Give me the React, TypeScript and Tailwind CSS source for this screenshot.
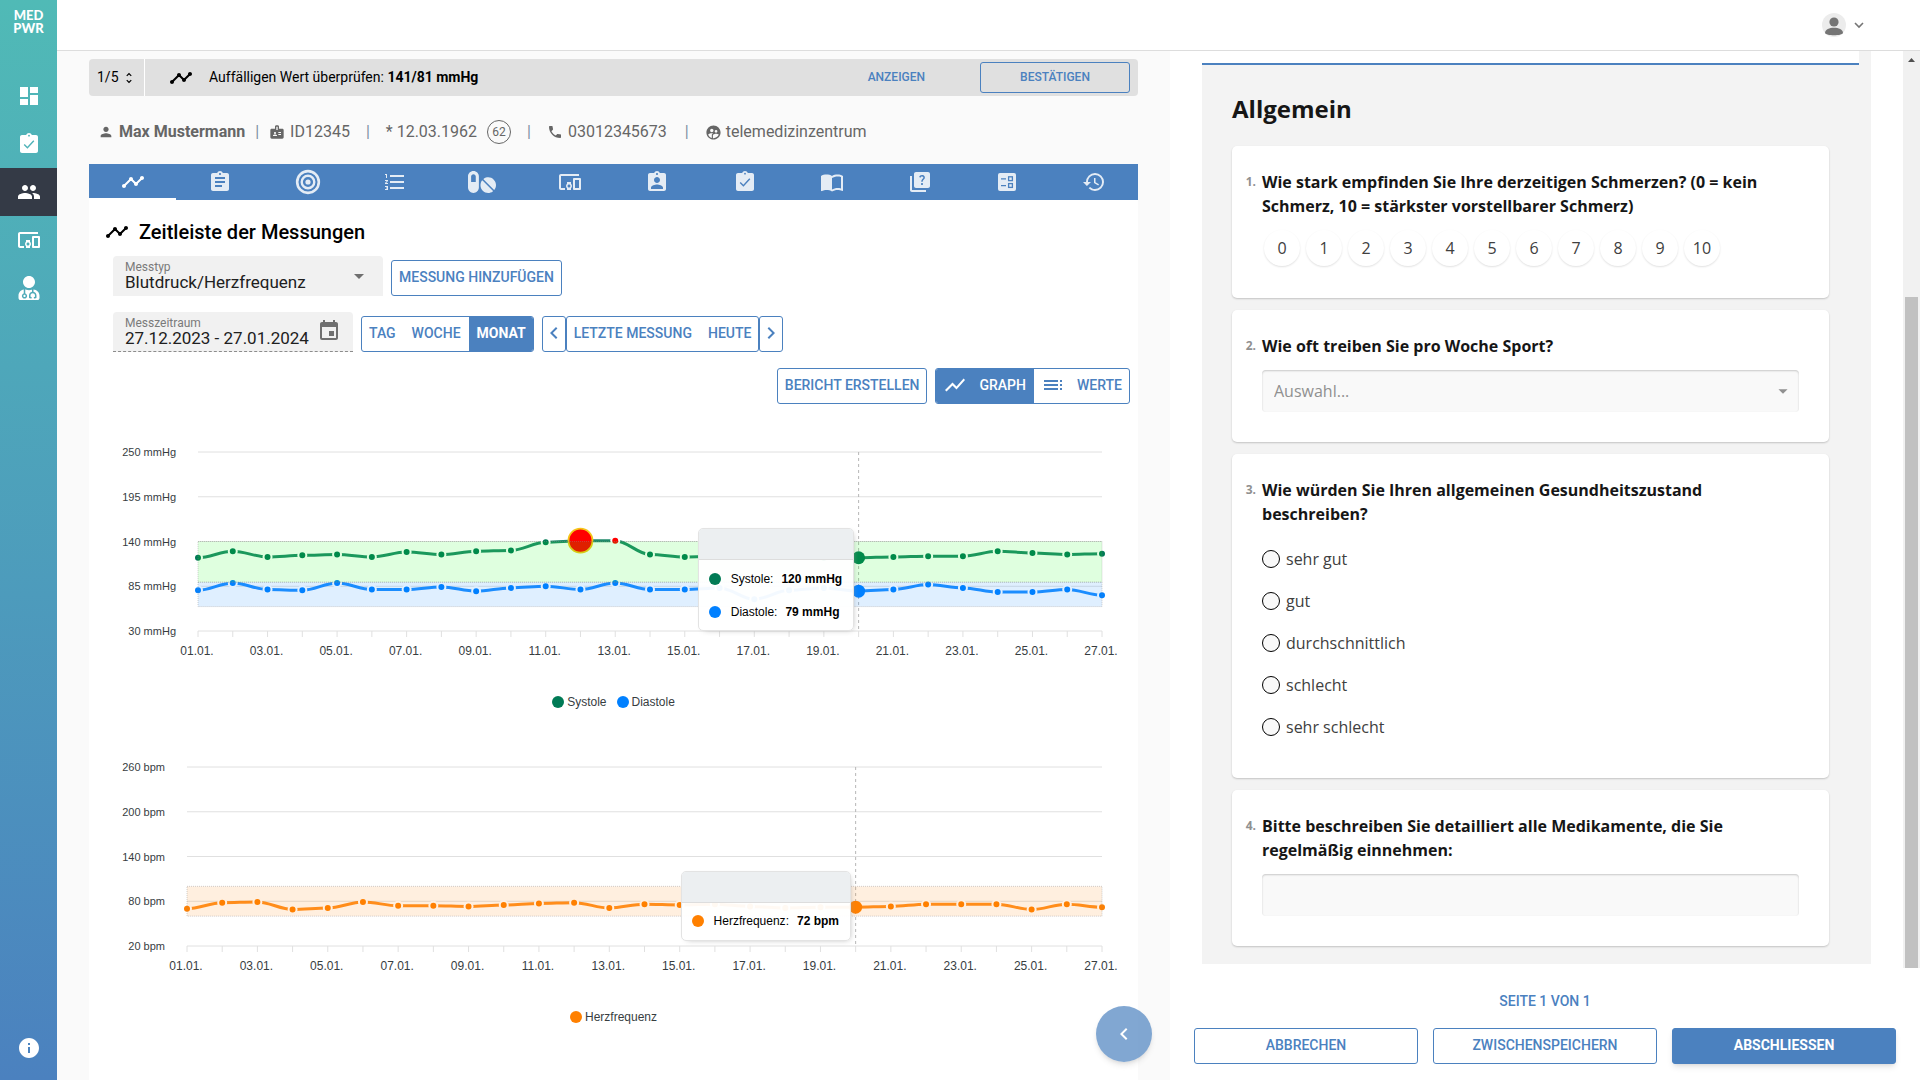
import { useState } from "react";
import type { ReactNode } from "react";
import clsx from "clsx";
import {
    MdArrowDropDown,
    MdAssignment,
    MdAssignmentInd,
    MdBadge,
    MdChevronLeft,
    MdChevronRight,
    MdDashboard,
    MdDevicesOther,
    MdEvent,
    MdFormatListNumbered,
    MdHistory,
    MdInfo,
    MdPeople,
    MdPerson,
    MdPhone,
    MdQuiz,
    MdShowChart,
    MdSupervisedUserCircle,
    MdTimeline,
    MdToc,
    MdUnfoldMore,
} from "react-icons/md";
import { FaPills, FaUserMd } from "react-icons/fa";

const ClipboardCheck = ({ mark }: { mark: string }) => (
    <svg viewBox="0 0 24 24" width="24" height="24" fill="currentColor">
        <path d="M19 3h-4.18C14.4 1.84 13.3 1 12 1s-2.4.84-2.82 2H5c-1.1 0-2 .9-2 2v14c0 1.1.9 2 2 2h14c1.1 0 2-.9 2-2V5c0-1.1-.9-2-2-2zm-7-.25a.9.9 0 1 1 0 1.8.9.9 0 0 1 0-1.8z" />
        <path d="M7.2 12.6l3.2 3.2 6.4-7" fill="none" stroke={mark} strokeWidth="1.4" />
    </svg>
);

const Target = () => (
    <svg viewBox="0 0 24 24" width="26" height="26" fill="none" stroke="currentColor">
        <circle cx="12" cy="12" r="10" strokeWidth="2.4" />
        <circle cx="12" cy="12" r="5.8" strokeWidth="2.2" />
        <circle cx="12" cy="12" r="2.4" fill="currentColor" stroke="none" />
    </svg>
);

const Book = () => (
    <svg viewBox="0 0 24 24" width="24" height="24" fill="currentColor">
        <path d="M21 5c-1.11-.35-2.33-.5-3.5-.5-1.95 0-4.05.4-5.5 1.5-1.45-1.1-3.55-1.5-5.5-1.5S2.45 4.9 1 6v14.65c0 .25.25.5.5.5.1 0 .15-.05.25-.05C3.1 20.45 5.05 20 6.5 20c1.95 0 4.05.4 5.5 1.5 1.35-.85 3.8-1.5 5.5-1.5 1.65 0 3.35.3 4.75 1.05.1.05.15.05.25.05.25 0 .5-.25.5-.5V6c-.6-.45-1.25-.75-2-1zm0 13.5c-1.1-.35-2.3-.5-3.5-.5-1.7 0-4.15.65-5.5 1.5V8c1.35-.85 3.8-1.5 5.5-1.5 1.2 0 2.4.15 3.5.5v11.5z" />
    </svg>
);

const Ballot = () => (
    <svg viewBox="0 0 24 24" width="24" height="24">
        <rect x="3" y="3" width="18" height="18" rx="2" fill="currentColor" />
        <g stroke="#4b81bf" strokeWidth="1.3" fill="none">
            <path d="M6 8.8h5M6 15.6h5" />
            <rect x="13.6" y="6.8" width="3.8" height="3.8" />
            <rect x="13.6" y="13.6" width="3.8" height="3.8" />
        </g>
    </svg>
);

const sideItems = [
    { name: "Dashboard", icon: <MdDashboard size={24} /> },
    { name: "Aufgaben", icon: <ClipboardCheck mark="#4fb3b8" /> },
    { name: "Patienten", icon: <MdPeople size={24} />, active: true },
    { name: "Geräte", icon: <MdDevicesOther size={24} /> },
    { name: "Ärzte", icon: <FaUserMd size={24} /> },
];

const tabs = [
    { name: "Messungen", icon: <MdTimeline size={24} /> },
    { name: "Berichte", icon: <MdAssignment size={24} /> },
    { name: "Ziele", icon: <Target /> },
    { name: "Liste", icon: <MdFormatListNumbered size={24} /> },
    { name: "Medikation", icon: <FaPills size={28} /> },
    { name: "Geräte", icon: <MdDevicesOther size={24} /> },
    { name: "Profil", icon: <MdAssignmentInd size={24} /> },
    { name: "Aufgaben", icon: <ClipboardCheck mark="#4b81bf" /> },
    { name: "Tagebuch", icon: <Book /> },
    { name: "Fragen", icon: <MdQuiz size={24} /> },
    { name: "Formulare", icon: <Ballot /> },
    { name: "Verlauf", icon: <MdHistory size={24} /> },
];

const systole = [
    120, 128, 121, 123, 124, 121, 127, 124, 128, 129, 139, 141, 141, 124, 121, 122, 121, 121, 120,
    120, 121, 122, 122, 128, 126, 124, 125,
];
const diastole = [
    80, 89, 81, 80, 89, 81, 81, 84, 79, 83, 85, 81, 89, 81, 81, 83, 69, 80, 83, 79, 81, 87, 83, 78,
    78, 81, 74,
];
const pulse = [
    70, 78, 79, 69, 71, 79, 74, 74, 73, 75, 77, 78, 71, 76, 75, 76, 73, 71, 72, 72, 73, 76, 76, 76,
    69, 76, 72,
];

type Band = { from: number; to: number; color: string };
type Series = { name: string; color: string; data: number[]; alarms?: number[] };
type ChartProps = {
    label: string;
    unit: string;
    ticks: number[];
    left: number;
    series: Series[];
    bands: Band[];
    selected: number;
};

const CHART_RIGHT = 1013;
const CHART_TOP = 16;
const CHART_HEIGHT = 179;

const Chart = ({ label, unit, ticks, left, series, bands, selected }: ChartProps) => {
    const max = ticks[0];
    const min = ticks[ticks.length - 1];
    const step = (CHART_RIGHT - left) / 26;
    const bottom = CHART_TOP + CHART_HEIGHT;
    const px = (i: number) => left + i * step;
    const py = (v: number) => CHART_TOP + ((max - v) / (max - min)) * CHART_HEIGHT;

    const curve = (data: number[]) =>
        data
            .map((v, i) => {
                if (i === 0) return `M${px(0)} ${py(v)}`;
                const c = step * 0.35;
                return `C${px(i - 1) + c} ${py(data[i - 1])} ${px(i) - c} ${py(v)} ${px(i)} ${py(v)}`;
            })
            .join("");

    return (
        <svg
            viewBox="0 0 1049 230"
            className="block w-full font-['Liberation_Sans',Arial,sans-serif]"
            role="img"
            aria-label={label}
        >
            {ticks.map((t) => (
                <g key={t}>
                    <line x1={left} x2={CHART_RIGHT} y1={py(t)} y2={py(t)} stroke="#e0e0e0" />
                    <text x={left - 22} y={py(t) + 4} textAnchor="end" fill="#373d3f" fontSize="11">
                        {t} {unit}
                    </text>
                </g>
            ))}
            {pulse.map((_, i) => (
                <line key={i} x1={px(i)} x2={px(i)} y1={bottom} y2={bottom + 6} stroke="#e0e0e0" />
            ))}
            {pulse.map((_, i) =>
                i % 2 === 0 ? (
                    <text key={i} x={px(i) - 1} y={bottom + 24} textAnchor="middle" fill="#373d3f" fontSize="12">
                        {String(i + 1).padStart(2, "0")}.01.
                    </text>
                ) : null
            )}
            <line
                x1={px(selected)}
                x2={px(selected)}
                y1={CHART_TOP}
                y2={bottom}
                stroke="#b6b6b6"
                strokeDasharray="3"
            />
            {series.map((s) => (
                <g key={s.name}>
                    <path d={curve(s.data)} fill="none" stroke={s.color} strokeOpacity="0.88" strokeWidth="3" />
                    {s.data.map((v, i) => (
                        <circle
                            key={i}
                            cx={px(i)}
                            cy={py(v)}
                            r={i === selected ? 6.5 : 4}
                            fill={s.alarms?.includes(i) ? "#ff0000" : s.color}
                            stroke={i === selected ? "none" : "#ffffff"}
                            strokeWidth="2"
                        />
                    ))}
                    {s.alarms ? (
                        <circle
                            cx={px(s.alarms[0])}
                            cy={py(s.data[s.alarms[0]])}
                            r="12"
                            fill="#ff0000"
                            stroke="#f5c518"
                            strokeWidth="1.8"
                        />
                    ) : null}
                </g>
            ))}
            {bands.map((b) => (
                <rect
                    key={b.from}
                    x={left}
                    width={CHART_RIGHT - left}
                    y={py(b.from)}
                    height={py(b.to) - py(b.from)}
                    fill={b.color}
                    fillOpacity="0.125"
                    stroke="#8a8a8a"
                    strokeOpacity="0.4"
                    strokeDasharray="1 1"
                />
            ))}
        </svg>
    );
};

const Legend = ({ items }: { items: { name: string; color: string }[] }) => (
    <div className="flex justify-center gap-[10px] font-['Liberation_Sans',Arial,sans-serif] text-[12px] leading-4 text-[#373d3f]">
        {items.map((it) => (
            <span key={it.name} className="flex items-center gap-[3px]">
                <span className="size-3 rounded-full" style={{ background: it.color }} />
                {it.name}
            </span>
        ))}
    </div>
);

const ChartTooltip = ({
    rows,
    className,
}: {
    rows: { name: string; value: string; color: string }[];
    className: string;
}) => (
    <div
        className={clsx(
            "absolute overflow-hidden rounded-[5px] border border-[#e3e3e3] bg-white/95 font-['Liberation_Sans',Arial,sans-serif] text-[12px] text-black shadow-[2px_2px_6px_-4px_#999]",
            className
        )}
    >
        <div className="h-[31px] border-b border-[#dddddd] bg-[#eceff1]" />
        {rows.map((r) => (
            <div key={r.name} className="flex h-[33px] items-center pt-1 pl-[10px] whitespace-nowrap">
                <span className="mr-[10px] size-3 rounded-full" style={{ background: r.color }} />
                <span>{r.name}:</span>
                <b className="ml-2">{r.value}</b>
            </div>
        ))}
    </div>
);

const Sidebar = () => (
    <nav className="flex w-[57px] shrink-0 flex-col items-center bg-linear-to-b from-[#50bab6] to-[#4b81bf] text-white">
        <a
            href="#"
            className="flex h-[72px] w-full flex-col items-center pt-[9px] font-['Lato',sans-serif] text-[13px] leading-[13px] font-black"
        >
            <span>MED</span>
            <span>PWR</span>
        </a>
        {sideItems.map((it) => (
            <button
                key={it.name}
                type="button"
                aria-label={it.name}
                className={clsx("flex h-12 w-full items-center justify-center", it.active && "bg-[#343a46]")}
            >
                {it.icon}
            </button>
        ))}
        <button type="button" aria-label="Info" className="mt-auto mb-5 flex">
            <MdInfo size={24} />
        </button>
    </nav>
);

const outline =
    "flex h-9 items-center justify-center rounded-[3px] border border-[#4b81bf] bg-white pb-[2px] text-[14px] font-medium text-[#4b81bf]";

const Divider = () => <span className="text-[#7e8fa3]">|</span>;

const Measurements = () => {
    const [range, setRange] = useState("MONAT");

    return (
        <section className="flex grow flex-col bg-white">
            <h1 className="flex items-center gap-[10px] pt-[18px] pl-4 text-[20px] leading-7 font-medium text-black">
                <MdTimeline size={24} />
                Zeitleiste der Messungen
            </h1>
            <div className="mt-[10px] flex items-end gap-2 pl-6">
                <div className="relative flex h-10 w-[270px] flex-col rounded-t-[4px] bg-[#f1f1f1] pt-1 pl-3">
                    <label htmlFor="typ" className="text-[12px] leading-[14px] text-[#7a7a7a]">
                        Messtyp
                    </label>
                    <select
                        id="typ"
                        className="h-4 w-full appearance-none bg-transparent text-[17px] leading-4 text-[#202020]"
                    >
                        <option>Blutdruck/Herzfrequenz</option>
                    </select>
                    <MdArrowDropDown
                        size={24}
                        className="pointer-events-none absolute top-2 right-3 text-[#6f6f6f]"
                    />
                </div>
                <button type="button" className={clsx(outline, "px-[7px]")}>
                    MESSUNG HINZUFÜGEN
                </button>
            </div>
            <div className="mt-4 flex items-end gap-2 pl-6">
                <div className="flex h-10 w-[240px] items-start rounded-t-[4px] border-b border-dashed border-[#8c8c8c] bg-[#f1f1f1] pt-1 pr-3 pl-3">
                    <div className="flex grow flex-col">
                        <label htmlFor="zeitraum" className="text-[12px] leading-[14px] text-[#7a7a7a]">
                            Messzeitraum
                        </label>
                        <input
                            id="zeitraum"
                            className="h-4 w-full min-w-0 bg-transparent text-[17px] leading-4 text-[#202020]"
                            defaultValue="27.12.2023 - 27.01.2024"
                        />
                    </div>
                    <MdEvent size={24} className="mt-[3px] shrink-0 text-[#6f6f6f]" />
                </div>
                <div className="flex h-9 overflow-hidden rounded-[3px] border border-[#4b81bf] text-[14px] font-medium">
                    {["TAG", "WOCHE", "MONAT"].map((r) => (
                        <button
                            key={r}
                            type="button"
                            onClick={() => setRange(r)}
                            className={clsx(
                                "px-2 pb-[2px] first:pl-[7px] last:pr-[7px]",
                                range === r ? "bg-[#4b81bf] font-bold text-white" : "text-[#4b81bf]"
                            )}
                        >
                            {r}
                        </button>
                    ))}
                </div>
                <div className="flex">
                    <button type="button" aria-label="Zurück" className={clsx(outline, "w-6")}>
                        <MdChevronLeft size={24} className="shrink-0" />
                    </button>
                    <div className={clsx(outline, "gap-4 px-[7px]")}>
                        <button type="button">LETZTE MESSUNG</button>
                        <button type="button">HEUTE</button>
                    </div>
                    <button type="button" aria-label="Weiter" className={clsx(outline, "w-6")}>
                        <MdChevronRight size={24} className="shrink-0" />
                    </button>
                </div>
            </div>
            <div className="mt-4 flex justify-end gap-2 pr-2">
                <button type="button" className={clsx(outline, "px-[7px]")}>
                    BERICHT ERSTELLEN
                </button>
                <div className="flex h-9 overflow-hidden rounded-[3px] border border-[#4b81bf] text-[14px] font-medium text-[#4b81bf]">
                    <button
                        type="button"
                        className="flex items-center gap-3 bg-[#4b81bf] pr-2 pb-[2px] pl-[7px] text-white"
                    >
                        <MdShowChart size={24} />
                        GRAPH
                    </button>
                    <button type="button" className="flex items-center gap-3 px-[7px] pb-[2px]">
                        <MdToc size={24} />
                        WERTE
                    </button>
                </div>
            </div>

            <div className="relative mt-8">
                <Chart
                    label="Blutdruck"
                    unit="mmHg"
                    ticks={[250, 195, 140, 85, 30]}
                    left={109}
                    series={[
                        { name: "Systole", color: "#007a55", data: systole, alarms: [11, 12] },
                        { name: "Diastole", color: "#0080ff", data: diastole },
                    ]}
                    bands={[
                        { from: 140, to: 90, color: "#00ff00" },
                        { from: 90, to: 60, color: "#0080ff" },
                    ]}
                    selected={19}
                />
                <ChartTooltip
                    className="top-[40%] right-[27.1%] h-[103px] w-[156px]"
                    rows={[
                        { name: "Systole", value: "120 mmHg", color: "#007a55" },
                        { name: "Diastole", value: "79 mmHg", color: "#0080ff" },
                    ]}
                />
            </div>
            <div className="mt-7">
                <Legend
                    items={[
                        { name: "Systole", color: "#007a55" },
                        { name: "Diastole", color: "#0080ff" },
                    ]}
                />
            </div>
            <div className="relative mt-[41px]">
                <Chart
                    label="Herzfrequenz"
                    unit="bpm"
                    ticks={[260, 200, 140, 80, 20]}
                    left={98}
                    series={[{ name: "Herzfrequenz", color: "#ff8000", data: pulse }]}
                    bands={[{ from: 100, to: 60, color: "#ff8000" }]}
                    selected={19}
                />
                <ChartTooltip
                    className="top-[52%] right-[27.4%] h-[70px] w-[170px]"
                    rows={[{ name: "Herzfrequenz", value: "72 bpm", color: "#ff8000" }]}
                />
            </div>
            <div className="mt-7">
                <Legend items={[{ name: "Herzfrequenz", color: "#ff8000" }]} />
            </div>
        </section>
    );
};

const PatientPane = () => (
    <main className="relative flex min-w-0 grow basis-0 flex-col bg-[#fafafa] pt-2 pr-8 pl-8">
        <div className="flex h-[37px] shrink-0 items-center rounded-[4px] bg-[#e0e0e0] text-[14px] text-black">
            <button type="button" className="flex h-full w-14 items-center gap-[3px] border-r border-white pl-2">
                1/5
                <MdUnfoldMore size={14} />
            </button>
            <MdTimeline size={24} className="mr-4 ml-6" />
            <p>
                Auffälligen Wert überprüfen: <b className="font-bold">141/81 mmHg</b>
            </p>
            <button type="button" className="mr-[55px] ml-auto pb-[2px] text-[12px] font-medium text-[#4b81bf]">
                ANZEIGEN
            </button>
            <button
                type="button"
                className="mr-2 h-[31px] w-[150px] rounded-[3px] border border-[#4b81bf] pb-[2px] text-[12px] font-medium text-[#4b81bf]"
            >
                BESTÄTIGEN
            </button>
        </div>
        <div className="flex h-[68px] shrink-0 items-center pt-1 pl-[9px] text-[16px] text-[#666666]">
            <MdPerson size={16} className="mr-[5px]" />
            <span className="mr-[10px] font-bold">Max Mustermann</span>
            <Divider />
            <MdBadge size={16} className="mr-[5px] ml-[10px]" />
            <span className="mr-4">ID12345</span>
            <Divider />
            <span className="mr-[10px] ml-4">* 12.03.1962</span>
            <span className="mr-4 flex size-6 items-center justify-center rounded-full border border-[#666666] text-[12px]">
                62
            </span>
            <Divider />
            <MdPhone size={16} className="mr-[5px] ml-4" />
            <span className="mr-[18px]">03012345673</span>
            <Divider />
            <MdSupervisedUserCircle size={17} className="mr-1 ml-4" />
            <span>telemedizinzentrum</span>
        </div>
        <div role="tablist" className="flex h-9 shrink-0 bg-[#4b81bf]">
            {tabs.map((t, i) => (
                <button
                    key={t.name}
                    type="button"
                    role="tab"
                    aria-label={t.name}
                    className={clsx(
                        "flex grow basis-0 items-center justify-center border-b-2 pt-[2px]",
                        i === 0 ? "border-white text-white" : "border-transparent text-white/85"
                    )}
                >
                    {t.icon}
                </button>
            ))}
        </div>
        <Measurements />
        <button
            type="button"
            aria-label="Einklappen"
            className="absolute right-[18px] bottom-[18px] flex size-14 items-center justify-center rounded-full bg-[#4b81bf]/70 text-white shadow-md"
        >
            <MdChevronLeft size={24} />
        </button>
    </main>
);

const Question = ({ no, title, children }: { no: number; title: string; children: ReactNode }) => (
    <div
        role="group"
        aria-labelledby={`frage-${no}`}
        className="flex rounded-[5px] bg-white pt-6 pr-[30px] pb-[30px] shadow-[0_1px_2px_rgba(0,0,0,0.2)]"
    >
        <span className="w-[30px] shrink-0 pr-[6px] text-right text-[12px] leading-6 font-bold text-[#909090]">
            {no}.
        </span>
        <div className="min-w-0 grow">
            <p id={`frage-${no}`} className="mb-3 text-[16px] leading-6 font-bold text-[#161616]">
                {title}
            </p>
            {children}
        </div>
    </div>
);

const field =
    "h-[42px] w-full appearance-none rounded-[4px] bg-[#f9f9f9] px-3 text-[16px] text-[#909090] shadow-[inset_0_1px_2px_rgba(0,0,0,0.2)]";

const Survey = () => {
    const [pain, setPain] = useState<number | null>(null);

    return (
        <div className="bg-[#f3f3f3] pb-[18px] font-['Open_Sans',sans-serif]">
            <div className="mr-3 h-[14px] border-b-2 border-[#4b81bf] bg-white" />
            <div className="flex flex-col gap-3 pr-[42px] pl-[30px]">
                <h2 className="mt-[26px] mb-[7px] text-[24px] leading-9 font-bold text-[#161616]">
                    Allgemein
                </h2>
                <Question
                    no={1}
                    title="Wie stark empfinden Sie Ihre derzeitigen Schmerzen? (0 = kein Schmerz, 10 = stärkster vorstellbarer Schmerz)"
                >
                    <div className="flex h-[38px] gap-[6px] pl-[2px]">
                        {[0, 1, 2, 3, 4, 5, 6, 7, 8, 9, 10].map((n) => (
                            <button
                                key={n}
                                type="button"
                                onClick={() => setPain(n)}
                                className={clsx(
                                    "size-9 rounded-full text-[16px] shadow-[0_1px_2px_rgba(0,0,0,0.12)]",
                                    pain === n ? "bg-[#4b81bf] text-white" : "bg-white text-[#404040]"
                                )}
                            >
                                {n}
                            </button>
                        ))}
                    </div>
                </Question>
                <Question no={2} title="Wie oft treiben Sie pro Woche Sport?">
                    <div className="relative">
                        <select className={field} aria-labelledby="frage-2">
                            <option>Auswahl...</option>
                        </select>
                        <MdArrowDropDown
                            size={22}
                            className="pointer-events-none absolute top-[10px] right-[5px] text-[#909090]"
                        />
                    </div>
                </Question>
                <Question no={3} title="Wie würden Sie Ihren allgemeinen Gesundheitszustand beschreiben?">
                    {["sehr gut", "gut", "durchschnittlich", "schlecht", "sehr schlecht"].map((o) => (
                        <label key={o} className="flex h-[42px] items-center gap-[6px] text-[16px] text-[#404040]">
                            <input
                                type="radio"
                                name="zustand"
                                className="size-[18px] appearance-none rounded-full border border-black bg-[#f9f9f9] checked:bg-[#4b81bf]"
                            />
                            {o}
                        </label>
                    ))}
                </Question>
                <Question no={4} title="Bitte beschreiben Sie detailliert alle Medikamente, die Sie regelmäßig einnehmen:">
                    <input className={clsx(field, "block")} aria-labelledby="frage-4" />
                </Question>
            </div>
        </div>
    );
};

const SurveyPane = () => (
    <aside className="flex w-[750px] shrink-0 flex-col bg-white">
        <div className="flex justify-between pl-8">
            <div className="mr-8 mb-1 grow">
                <Survey />
            </div>
            <div className="flex w-[17px] flex-col items-center bg-[#f1f1f1]">
                <svg viewBox="0 0 17 17" width="17" height="17" fill="#505050">
                    <path d="M5 11h7L8.500 7z" />
                </svg>
                <div className="mt-[229px] w-[13px] grow bg-[#c1c1c1]" />
            </div>
        </div>
        <p className="mt-[23px] text-center text-[14px] leading-5 font-medium text-[#4b81bf]">SEITE 1 VON 1</p>
        <div className="mt-[17px] flex gap-[15px] px-6">
            <button type="button" className={clsx(outline, "grow basis-0")}>
                ABBRECHEN
            </button>
            <button type="button" className={clsx(outline, "grow basis-0")}>
                ZWISCHENSPEICHERN
            </button>
            <button
                type="button"
                className="h-9 grow basis-0 rounded-[3px] border border-[#4b81bf] bg-[#4b81bf] pb-[2px] text-[14px] font-bold text-white shadow-md"
            >
                ABSCHLIESSEN
            </button>
        </div>
    </aside>
);

export default () => {
    return (
        <div className="flex min-h-screen font-['Roboto',sans-serif]">
            <Sidebar />
            <div className="flex min-w-0 grow flex-col">
                <header className="flex h-[51px] shrink-0 items-center justify-end border-b border-[#dddddd] bg-white pr-14">
                    <button type="button" aria-label="Konto" className="flex items-center gap-2 text-[#757575]">
                        <svg viewBox="0 0 24 24" width="24" height="24">
                            <circle cx="12" cy="12" r="12" fill="#ececec" />
                            <circle cx="12" cy="9" r="4.600" fill="#757575" />
                            <path d="M3 20c0-7 18-7 18 0-1 3-17 3-18 0z" fill="#757575" />
                        </svg>
                        <svg viewBox="0 0 10 10" width="10" height="10" fill="none" stroke="currentColor">
                            <path d="M1 3l4 4 4-4" strokeWidth="1.600" />
                        </svg>
                    </button>
                </header>
                <div className="flex grow">
                    <PatientPane />
                    <SurveyPane />
                </div>
            </div>
        </div>
    );
};
